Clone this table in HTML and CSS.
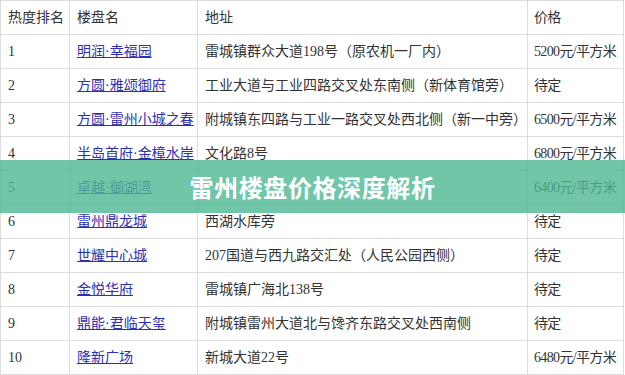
FILE: index.html
```html
<!DOCTYPE html>
<html lang="zh-CN">
<head>
<meta charset="utf-8">
<title>雷州楼盘价格深度解析</title>
<link rel="stylesheet" href="styles.css">
</head>
<body>
<div class="page">
  <table class="estates">
    <colgroup>
      <col class="c-rank"><col class="c-name"><col class="c-addr"><col class="c-price">
    </colgroup>
    <thead>
      <tr><th>热度排名</th><th>楼盘名</th><th>地址</th><th class="price">价格</th></tr>
    </thead>
    <tbody>
      <tr><td>1</td><td><a href="#">明润·幸福园</a></td><td>雷城镇群众大道198号（原农机一厂内）</td><td class="price">5200元/平方米</td></tr>
      <tr><td>2</td><td><a href="#">方圆·雅颂御府</a></td><td>工业大道与工业四路交叉处东南侧（新体育馆旁）</td><td class="price">待定</td></tr>
      <tr><td>3</td><td><a href="#">方圆·雷州小城之春</a></td><td>附城镇东四路与工业一路交叉处西北侧（新一中旁）</td><td class="price">6500元/平方米</td></tr>
      <tr><td>4</td><td><a href="#">半岛首府·金樟水岸</a></td><td>文化路8号</td><td class="price">6800元/平方米</td></tr>
      <tr><td>5</td><td><a href="#">卓越·御湖湾</a></td><td></td><td class="price">6400元/平方米</td></tr>
      <tr><td>6</td><td><a href="#">雷州鼎龙城</a></td><td>西湖水库旁</td><td class="price">待定</td></tr>
      <tr><td>7</td><td><a href="#">世耀中心城</a></td><td>207国道与西九路交汇处（人民公园西侧）</td><td class="price">待定</td></tr>
      <tr><td>8</td><td><a href="#">金悦华府</a></td><td>雷城镇广海北138号</td><td class="price">待定</td></tr>
      <tr><td>9</td><td><a href="#">鼎能·君临天玺</a></td><td>附城镇雷州大道北与馋齐东路交叉处西南侧</td><td class="price">待定</td></tr>
      <tr><td>10</td><td><a href="#">隆新广场</a></td><td>新城大道22号</td><td class="price">6480元/平方米</td></tr>
    </tbody>
  </table>
  <div class="banner"><h1 class="banner-title">雷州楼盘价格深度解析</h1></div>
</div>
</body>
</html>
```

FILE: styles.css
```css
html, body {
  margin: 0;
  padding: 0;
  background: #ffffff;
}
.page {
  position: relative;
  width: 625px;
  height: 375px;
  overflow: hidden;
}
.estates {
  border-collapse: collapse;
  table-layout: fixed;
  width: 623px;
  font-family: "Liberation Serif", "Noto Sans CJK SC", serif;
  font-size: 14px;
  color: #333333;
}
.c-rank { width: 69px; }
.c-name { width: 128px; }
.c-addr { width: 330px; }
.c-price { width: 96px; }
.estates th,
.estates td {
  border: 1px solid #dddddd;
  height: 33px;
  padding: 0 0 0 7px;
  text-align: left;
  font-weight: normal;
  white-space: nowrap;
  overflow: hidden;
  vertical-align: middle;
  line-height: 20px;
}
.estates .price {
  padding-left: 6px;
  letter-spacing: -0.65px;
}
.estates a {
  color: #2f2fb4;
  text-decoration: underline;
}
.banner {
  position: absolute;
  left: 0;
  right: 0;
  top: 160px;
  height: 53px;
  background: rgba(76, 184, 145, 0.8);
  display: flex;
  align-items: center;
  justify-content: center;
}
.banner-title {
  margin: 0;
  font-family: "Noto Sans CJK SC", "Noto Sans", sans-serif;
  font-size: 24px;
  font-weight: 700;
  letter-spacing: 0.6px;
  color: #ffffff;
  line-height: 1;
}
```
